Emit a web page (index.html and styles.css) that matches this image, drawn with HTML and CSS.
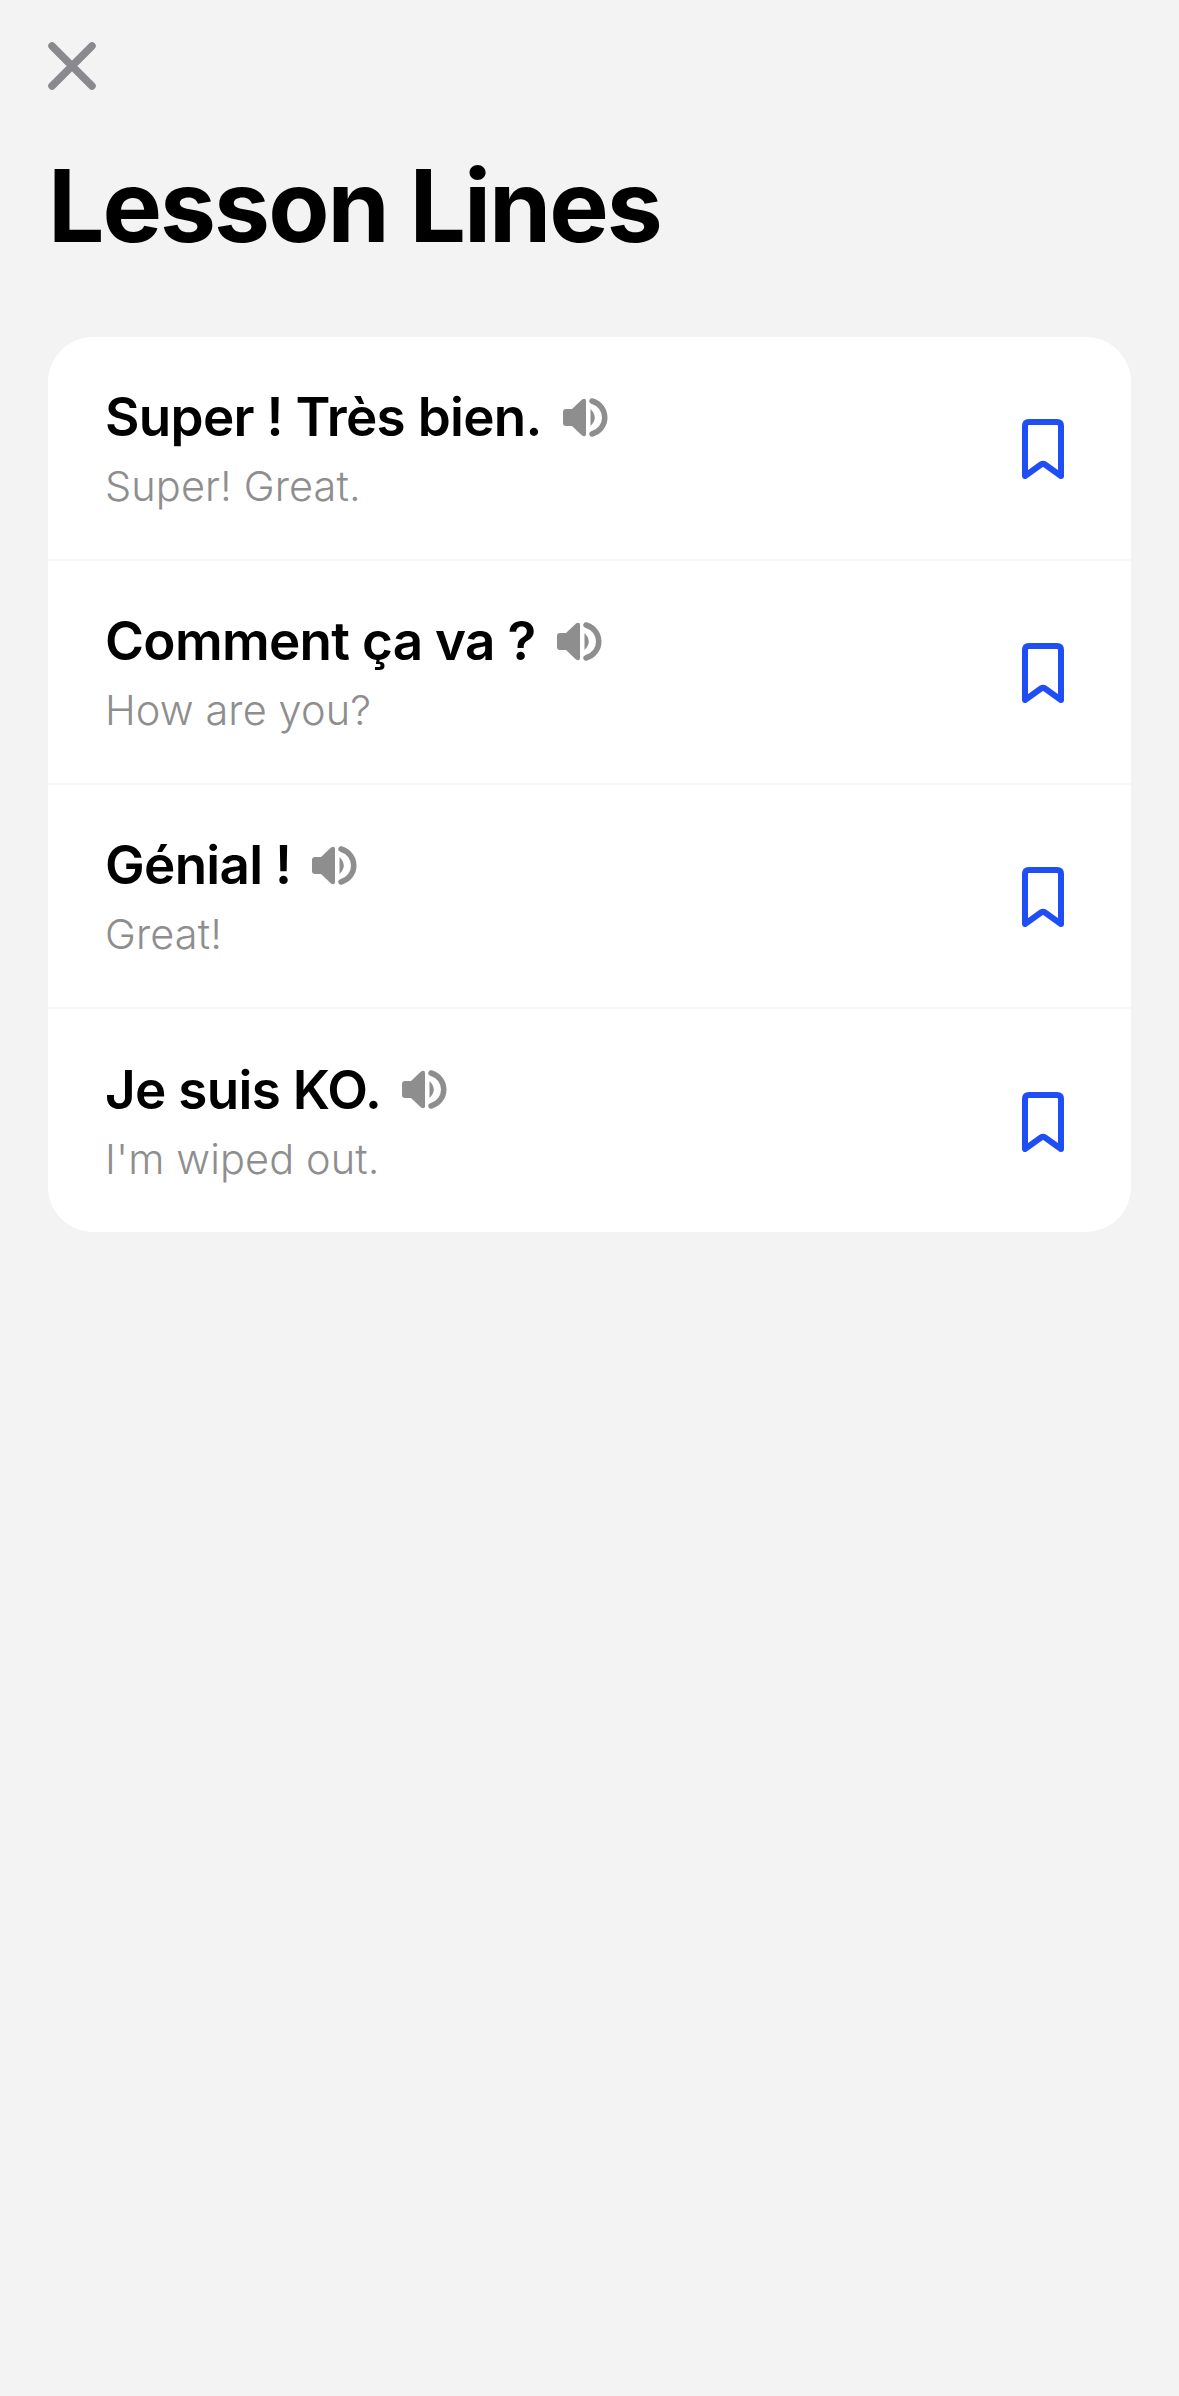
FILE: index.html
```html
<!DOCTYPE html>
<html lang="en">
<head>
  <meta charset="UTF-8">
  <meta name="viewport" content="width=device-width, initial-scale=1.0">
  <title>Lesson Lines</title>
  <link rel="stylesheet" href="styles.css">
</head>
<body>
  <svg width="0" height="0" class="defs">
    <symbol id="speaker" viewBox="0 0 45 39">
      <path d="M3 11H9L19 1.500Q23 -0.500 23 3V36Q23 39.500 19 37.500L9 28H3Q0 28 0 25V14Q0 11 3 11Z"/>
      <path d="M27.500 11Q36 19.500 27.500 28Z"/>
      <path d="M29 3C46 8 46 31 29 36" fill="none" stroke="currentColor" stroke-width="5.500" stroke-linecap="round"/>
    </symbol>
    <symbol id="bookmark" viewBox="0 0 42 60">
      <path d="M3 57V7Q3 3 7 3H35Q39 3 39 7V57L23 45.500Q21 44 19 45.500Z" fill="none" stroke="currentColor" stroke-width="6" stroke-linejoin="round"/>
    </symbol>
  </svg>

  <div class="close">
    <svg width="48" height="48" viewBox="0 0 48 48"><path d="M4 4L44 44M44 4L4 44" stroke="currentColor" stroke-width="7.500" stroke-linecap="round"/></svg>
  </div>

  <h1>Lesson Lines</h1>

  <div class="card">
    <div class="row">
      <div class="text">
        <div class="line"><span>Super ! Très bien.</span><svg class="speaker"><use href="#speaker"/></svg></div>
        <div class="sub">Super! Great.</div>
      </div>
      <svg class="bookmark"><use href="#bookmark"/></svg>
    </div>
    <div class="row">
      <div class="text">
        <div class="line"><span>Comment ça va ?</span><svg class="speaker"><use href="#speaker"/></svg></div>
        <div class="sub">How are you?</div>
      </div>
      <svg class="bookmark"><use href="#bookmark"/></svg>
    </div>
    <div class="row">
      <div class="text">
        <div class="line"><span>Génial !</span><svg class="speaker"><use href="#speaker"/></svg></div>
        <div class="sub">Great!</div>
      </div>
      <svg class="bookmark"><use href="#bookmark"/></svg>
    </div>
    <div class="row">
      <div class="text">
        <div class="line"><span>Je suis KO.</span><svg class="speaker"><use href="#speaker"/></svg></div>
        <div class="sub">I'm wiped out.</div>
      </div>
      <svg class="bookmark"><use href="#bookmark"/></svg>
    </div>
  </div>
</body>
</html>
```

FILE: styles.css
```css
html, body { height: 100%; }
body { margin: 0; padding: 42px 48px 0; box-sizing: border-box; background: #f3f3f4; font-family: Inter, "Noto Sans", sans-serif; color: #000; }
.defs { display: block; height: 0; }
.close { width: 48px; height: 48px; color: #8a8a8e; }
.close svg { display: block; }
h1 { margin: 58px 0 0; height: 189px; font-size: 100px; line-height: 116px; font-weight: 700; letter-spacing: -2px; }
.card { background: #fff; border-radius: 45px; overflow: hidden; }
.row { display: flex; align-items: center; height: 222px; padding: 0 67px 0 57px; border-bottom: 2px solid #f6f6f7; }
.row:last-child { border-bottom: 0; height: 223px; }
.text { flex: 1; }
.line { display: flex; align-items: center; gap: 21px; font-size: 53px; line-height: 62px; font-weight: 600; letter-spacing: -0.7px; }
.speaker { width: 45px; height: 39px; fill: #8e8e8e; color: #8e8e8e; }
.sub { margin-top: 14px; font-size: 41.500px; line-height: 48px; font-weight: 350; color: #8e8e8e; letter-spacing: 0.1px; }
.bookmark { width: 42px; height: 60px; margin-top: 2px; color: #1f4ef5; }
```
